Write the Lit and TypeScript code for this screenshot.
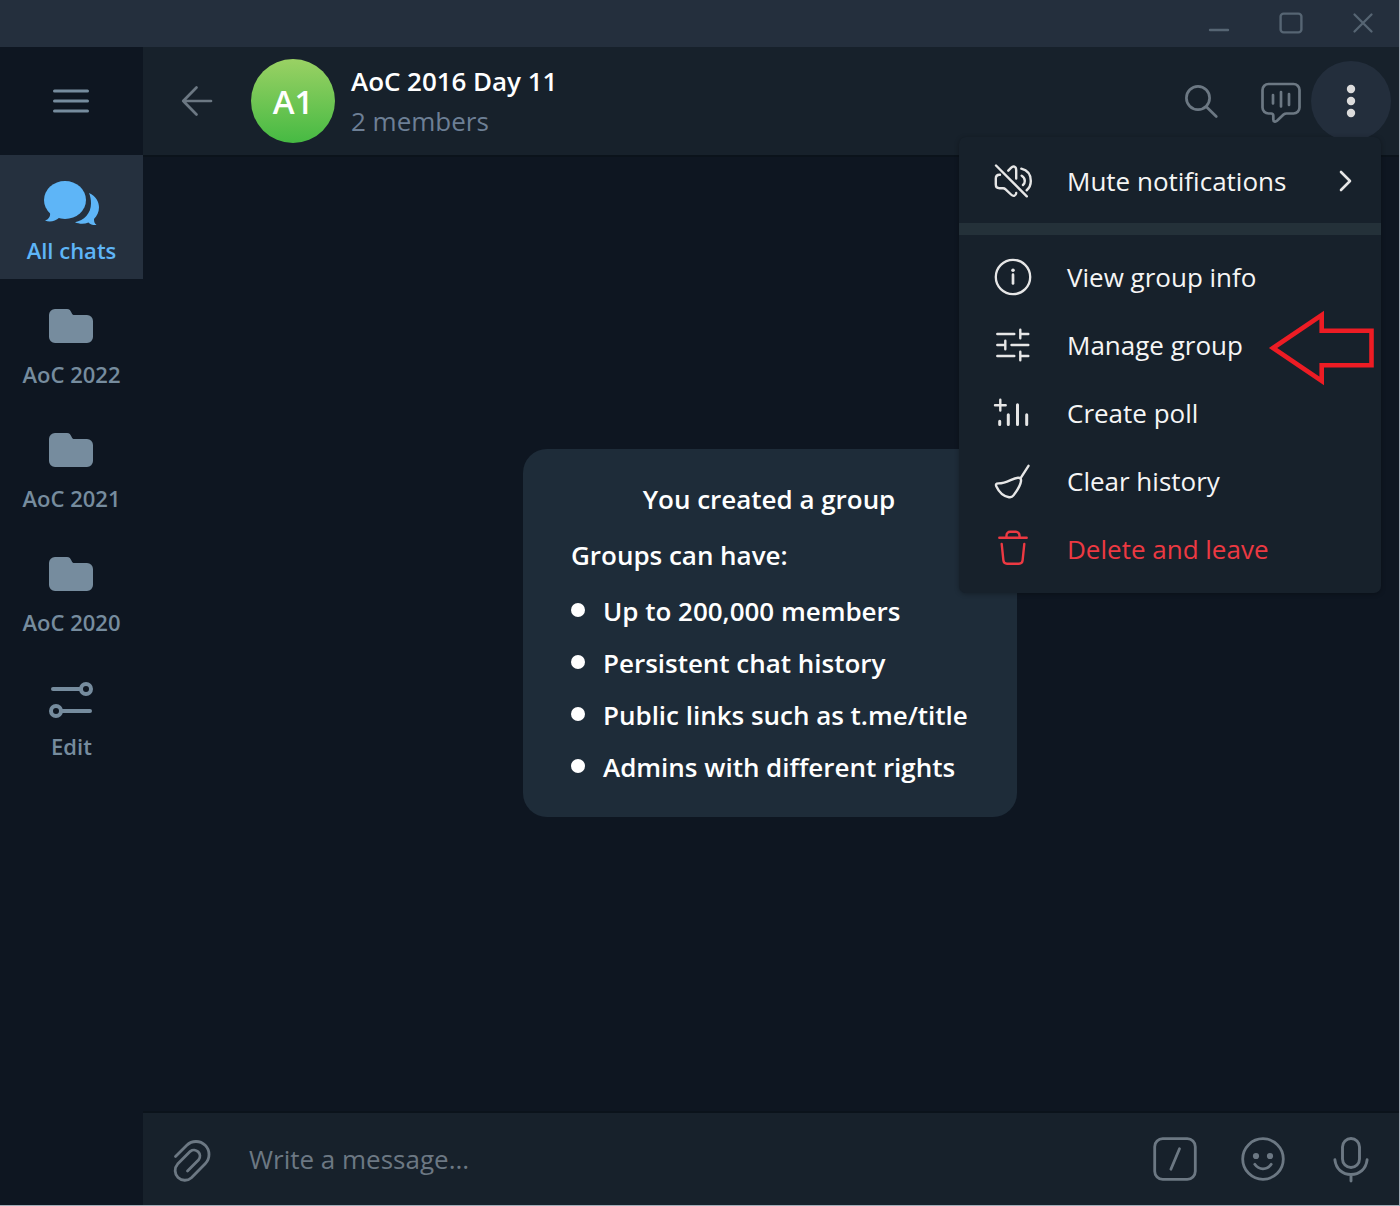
import { LitElement, html, css, svg } from "lit";
import { customElement, property } from "lit/decorators.js";

const icons: Record<string, unknown> = {
  chats: svg`<g fill="currentColor" stroke="none"><ellipse cx="24" cy="30" rx="21" ry="19"/><path d="M9 42C9.8 46.500 7.500 49.500 4 50.500C8.500 52.500 14 51.500 18.500 47.500Z"/><path d="M48 23C55 26 58 32 58 37.200C58 42 56 46 53 49C53 52 53.500 53.500 55.500 55C52 55.300 49.500 54.500 47.500 52.500C43 54.300 38 54 34 52.200C43 50.500 50 43.500 50 33.500C50 29.500 49.300 26 48 23Z"/></g>`,
  folder: svg`<path fill="currentColor" stroke="none" d="M14 15H26C28.600 15 29.500 16.600 30.400 18.500C31.300 20.400 31.800 21 33.500 21H46a6 6 0 0 1 6 6V43a6 6 0 0 1-6 6H14a6 6 0 0 1-6-6V21a6 6 0 0 1 6-6Z"/>`,
  edit: svg`<g stroke-width="4"><circle cx="45" cy="23" r="5"/><path d="M12 23H39"/><circle cx="15" cy="45" r="5"/><path d="M21 45H49"/></g>`,
  menu: svg`<path stroke-width="3" d="M1.500 2H34.500M1.500 12H34.500M1.500 22H34.500"/>`,
  back: svg`<path stroke-width="2.700" d="M2.200 16H30M15.500 2.500L2.200 16L15.500 29.500"/>`,
  search: svg`<path stroke-width="2.700" d="M23.600 24L33.300 33.500"/><circle cx="15" cy="15" r="11.600" stroke-width="2.700"/>`,
  voice: svg`<g stroke-width="2.700"><path d="M9.500 4H34.500a6 6 0 0 1 6 6V27.500a6 6 0 0 1-6 6H27.500c-1.200 0-2 .3-2.900 1.100L18 40.800c-1.700 1.500-3.700.800-3.700-1.300V35.700c0-1.400-.8-2.200-2.200-2.200H9.500a6 6 0 0 1-6-6V10a6 6 0 0 1 6-6Z"/><path d="M14 15V23.500M22 12V26.500M30 14V25"/></g>`,
  dots: svg`<g fill="currentColor" stroke="none"><circle cx="5" cy="4" r="4.200"/><circle cx="5" cy="16" r="4.200"/><circle cx="5" cy="28" r="4.200"/></g>`,
  minimize: svg`<path stroke-width="2.400" d="M3 19H21"/>`,
  maximize: svg`<rect x="1.600" y="2.600" width="20.800" height="18.800" rx="3" stroke-width="2.400"/>`,
  close: svg`<path stroke-width="2.300" d="M3.500 3.500L20.500 20.500M20.500 3.500L3.500 20.500"/>`,
  mute: svg`<path d="M5 6.500L35.800 37.300M9 15.700H8.500C6 15.700 4.800 17 4.800 19.500V25.500C4.800 28 6 29.200 8.500 29.200H12C13.200 29.200 13.800 29.500 14.600 30.300L20 35.500C22.600 38 25 36.800 25.200 34M17.300 11.700L20 8.900C22.300 6.500 25.200 7.500 25.200 11V19.500M30.300 9.700C37 11.300 39.800 16.500 39.800 22C39.800 25.700 38.500 28.900 35.700 31.200M30.700 16.700C33 18 33.800 19.800 33.800 22C33.800 23.500 33.200 25 32 26"/>`,
  info: svg`<circle cx="22" cy="22" r="17.200" stroke-width="2.300"/><path stroke-width="2.700" d="M22 19.700V28.500"/><circle cx="22" cy="15.200" r="1.800" fill="currentColor" stroke="none"/>`,
  sliders: svg`<path d="M6.300 11H23.300M29.300 6.800V15.200M29.300 11H37.300M6.300 22H14.300M14.300 17.800V26.200M20.500 22H37.300M6.300 33H23.300M29.300 28.800V37.200M29.300 33H37.300"/>`,
  poll: svg`<path d="M4 14.200H14.700M9.300 8.800V19.600"/><path stroke-width="3" d="M8.700 30.300V33.500M17.300 23.800V33.500M26.500 13.800V33.500M35.700 23.800V33.500"/>`,
  broom: svg`<path d="M37.500 6.800L29.300 19.700M27.500 18.700C21.500 18.700 16.500 24.400 7.500 24.400C5 24.400 4.500 25.500 5.400 27.400C8 33 13 37.300 18 38.200C20 38.600 21.300 38 22.500 36.400C26 31.800 29.400 27 30 22C30.300 20 29.300 18.700 27.500 18.700Z"/>`,
  trash: svg`<path d="M8.300 10.700H35.700M15.500 10.500V8.500a3.700 3.700 0 0 1 3.700-3.700h5.600a3.700 3.700 0 0 1 3.700 3.700V10.500M10.700 17L12.400 33.400C12.700 35.700 13.900 36.700 16 36.700H28C30.100 36.700 31.300 35.700 31.600 33.400L33.300 17"/>`,
  chevron: svg`<path stroke-width="2.600" d="M2 2L11 11L2 20"/>`,
  clip: svg`<path stroke-width="2.800" d="M4.500 19.600L15.800 8.300A13 13 0 0 1 34.200 26.700L20.400 40.700A9.700 9.700 0 0 1 6.600 27.100L19.300 14.300A6 6 0 0 1 27.700 22.700L16.500 33.900"/>`,
  command: svg`<rect x="1.700" y="1.700" width="40.600" height="40.600" rx="8" stroke-width="2.800"/><path stroke-width="2.800" d="M26.500 11.800L17.900 32.300"/>`,
  smile: svg`<g stroke-width="2.800"><circle cx="22" cy="22" r="20.300"/><path d="M13.800 27.300C18 33.300 26 33.300 30.200 27.300"/></g><g fill="currentColor" stroke="none"><circle cx="15" cy="19" r="3.100"/><circle cx="29" cy="19" r="3.100"/></g>`,
  mic: svg`<g stroke-width="2.900"><rect x="13.500" y="1.500" width="17" height="29" rx="8.500"/><path d="M5.900 22.800C7 32 13.500 37.500 22 37.500S37 32 38.100 22.800M22 38V44"/></g>`,
  arrow: svg`<path stroke-width="4.600" stroke-linejoin="miter" d="M3 37L51.700 4V19.700H101.500V54.200H51.700V70Z"/>`,
};

@customElement("ui-icon")
class UiIcon extends LitElement {
  @property() name = "";
  @property({ type: Number }) w = 44;
  @property({ type: Number }) h = 44;
  static styles = css`
    :host { display: block; flex: none; }
    svg { display: block; overflow: visible; fill: none; stroke: currentColor; stroke-width: 2.4; stroke-linecap: round; stroke-linejoin: round; }
  `;
  render() {
    return html`<svg width=${this.w} height=${this.h} viewBox="0 0 ${this.w} ${this.h}">${icons[this.name]}</svg>`;
  }
}

@customElement("app-root")
class AppRoot extends LitElement {
  static styles = css`
    :host { display: block; font-family: "Open Sans", "Noto Sans", sans-serif; font-size: 26px; color: #fff; }
    * { box-sizing: border-box; }
    .window { width: 1400px; height: 1206px; display: flex; flex-direction: column; background: #0e1621; border-right: 1px solid #a3adb8; border-bottom: 1px solid #a3adb8; overflow: hidden; }
    .titlebar { height: 47px; flex: none; display: flex; align-items: center; justify-content: flex-end; gap: 48px; padding-right: 24px; padding-bottom: 1px; background: #242f3d; color: #566573; }
    .body { flex: 1; display: flex; min-height: 0; }
    .sidebar { width: 143px; flex: none; color: #768c9e; }
    .burger { height: 108px; display: flex; align-items: center; justify-content: center; }
    .tab { height: 124px; display: flex; flex-direction: column; align-items: center; padding-top: 15px; }
    .tab.active { background: #25303e; color: #5eb5f7; }
    .tab-label { margin-top: 5px; line-height: 30px; font-size: 22px; font-weight: 600; white-space: nowrap; }
    .main { flex: 1; display: flex; flex-direction: column; min-width: 0; }
    .header { position: relative; height: 108px; flex: none; display: flex; align-items: center; padding: 0 8px 0 38px; background: #17212b; color: #6c7883; box-shadow: 0 2px 0 #0b131b; }
    .avatar { width: 84px; height: 84px; margin-left: 38px; border-radius: 50%; background: linear-gradient(#9ad164, #46ba43); display: flex; align-items: center; justify-content: center; padding-top: 1px; color: #fff; font-size: 33px; font-weight: 600; }
    .who { flex: 1; margin-left: 16px; line-height: 40px; white-space: nowrap; }
    .title { color: #fff; font-weight: 600; letter-spacing: -0.05px; }
    .members { color: #6d7f95; }
    .actions { display: flex; align-items: center; }
    .voice { margin: 2px 8px 0 40px; }
    .more { width: 80px; height: 80px; border-radius: 50%; background: #232e3c; color: #dcdcdc; display: flex; align-items: center; justify-content: center; }
    .chat { flex: 1; display: flex; align-items: center; justify-content: center; padding: 0 2px 2px 0; }
    .card { width: 494px; height: 368px; padding: 32px 48px 0; border-radius: 24px; background: #1e2c39; font-weight: 600; line-height: 36px; letter-spacing: -0.02px; white-space: nowrap; }
    .card-title { padding-right: 2px; text-align: center; }
    .card-lead { margin-top: 20px; }
    .facts { display: flex; flex-direction: column; gap: 16px; margin: 20px 0 0; padding: 0; list-style: none; }
    .fact { display: flex; align-items: center; gap: 18px; }
    .bullet { width: 14px; height: 14px; margin-bottom: 2px; border-radius: 50%; background: #fff; }
    .composer { height: 92px; flex: none; display: flex; align-items: center; padding: 0 26px 0 28px; background: #17212b; color: #6c7883; box-shadow: 0 -2px 0 #0b131b; }
    .placeholder { flex: 1; margin-left: 34px; }
    .tools { display: flex; gap: 44px; }
    .menu { position: absolute; z-index: 2; top: 90px; right: 18px; width: 422px; height: 456px; padding: 10px 0; border-radius: 7px; background: #17212b; color: #fafafa; box-shadow: 0 1px 5px rgba(0, 0, 0, 0.3); }
    .item { height: 68px; display: flex; align-items: center; gap: 32px; padding: 0 29px 0 32px; color: #f5f5f5; white-space: nowrap; }
    .item.danger { color: #ec3942; }
    .item-icon { color: #e6e6e6; }
    .danger .item-icon { color: #ec3942; }
    .item-label { flex: 1; }
    .divider { height: 12px; margin: 8px 0; background: #243139; }
    .pointer { position: absolute; z-index: 3; left: 1127px; top: 264px; color: #ed1c24; }
  `;

  private tabs = [
    ["chats", "All chats"], ["folder", "AoC 2022"], ["folder", "AoC 2021"], ["folder", "AoC 2020"], ["edit", "Edit"],
  ];
  private facts = ["Up to 200,000 members", "Persistent chat history", "Public links such as t.me/title", "Admins with different rights"];
  private items = [
    ["info", "View group info"], ["sliders", "Manage group"], ["poll", "Create poll"], ["broom", "Clear history"], ["trash", "Delete and leave"],
  ];

  render() {
    return html`<div class="window">
      <div class="titlebar">
        ${["minimize", "maximize", "close"].map((n) => html`<ui-icon name=${n} w="24" h="24"></ui-icon>`)}
      </div>
      <div class="body">
        <nav class="sidebar">
          <div class="burger"><ui-icon name="menu" w="37" h="24"></ui-icon></div>
          ${this.tabs.map(([icon, label], i) => html`<div class="tab ${i === 0 ? "active" : ""}">
            <ui-icon name=${icon} w="61" h="60"></ui-icon><span class="tab-label">${label}</span>
          </div>`)}
        </nav>
        <main class="main">
          <header class="header">
            <ui-icon name="back" w="32" h="32"></ui-icon>
            <div class="avatar">A1</div>
            <div class="who"><div class="title">AoC 2016 Day 11</div><div class="members">2 members</div></div>
            <div class="actions">
              <ui-icon name="search" w="36" h="36"></ui-icon>
              <ui-icon class="voice" name="voice"></ui-icon>
              <div class="more"><ui-icon name="dots" w="10" h="32"></ui-icon></div>
            </div>
            <div class="menu">
              <div class="item"><ui-icon class="item-icon" name="mute"></ui-icon><span class="item-label">Mute notifications</span><ui-icon class="item-icon" name="chevron" w="13" h="22"></ui-icon></div>
              <div class="divider"></div>
              ${this.items.map(([icon, label]) => html`<div class="item ${icon === "trash" ? "danger" : ""}">
                <ui-icon class="item-icon" name=${icon}></ui-icon><span class="item-label">${label}</span>
              </div>`)}
            </div>
            <ui-icon class="pointer" name="arrow" w="106" h="74"></ui-icon>
          </header>
          <section class="chat">
            <div class="card">
              <div class="card-title">You created a group</div>
              <div class="card-lead">Groups can have:</div>
              <ul class="facts">${this.facts.map((f) => html`<li class="fact"><span class="bullet"></span><span>${f}</span></li>`)}</ul>
            </div>
          </section>
          <footer class="composer">
            <ui-icon name="clip"></ui-icon>
            <span class="placeholder">Write a message...</span>
            <div class="tools">${["command", "smile", "mic"].map((n) => html`<ui-icon name=${n}></ui-icon>`)}</div>
          </footer>
        </main>
      </div>
    </div>`;
  }
}
